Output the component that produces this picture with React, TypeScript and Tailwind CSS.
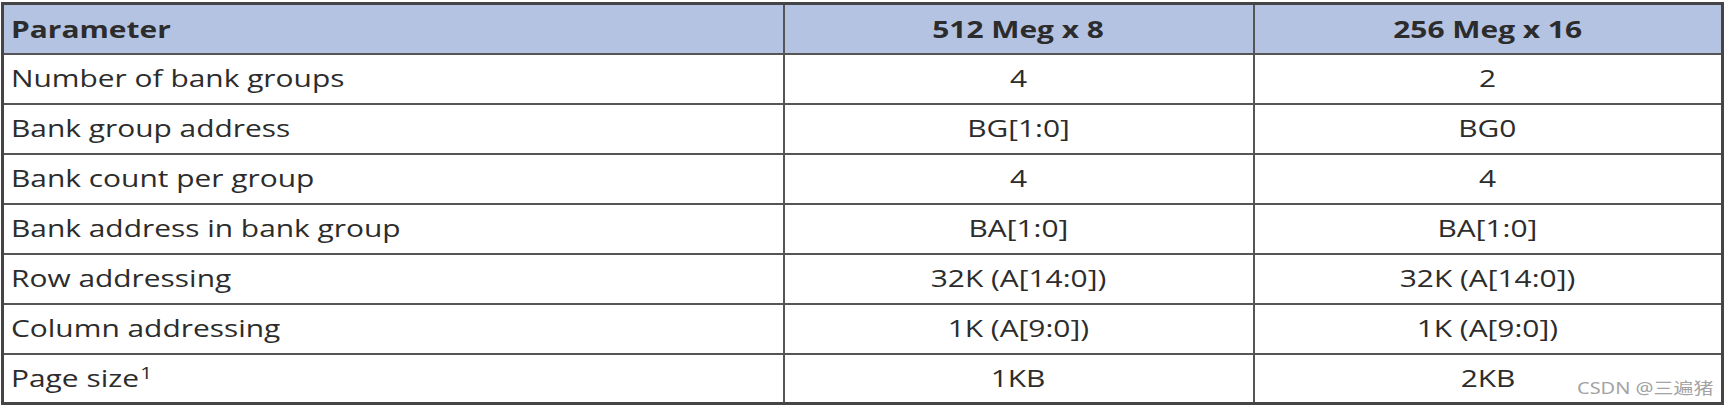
const ROWS: { name: React.ReactNode; a: string; b: string }[] = [
  { name: "Number of bank groups", a: "4", b: "2" },
  { name: "Bank group address", a: "BG[1:0]", b: "BG0" },
  { name: "Bank count per group", a: "4", b: "4" },
  { name: "Bank address in bank group", a: "BA[1:0]", b: "BA[1:0]" },
  { name: "Row addressing", a: "32K (A[14:0])", b: "32K (A[14:0])" },
  { name: "Column addressing", a: "1K (A[9:0])", b: "1K (A[9:0])" },
  {
    name: (
      <>
        Page size<sup className="text-[16px] relative -top-[8px] ml-[1px]">1</sup>
      </>
    ),
    a: "1KB",
    b: "2KB",
  },
];

// the source image is stretched sideways, so glyphs are widened to match
function Wide({ children, center }: { children: React.ReactNode; center?: boolean }) {
  return (
    <span className={`inline-block whitespace-nowrap scale-x-[1.3] ${center ? "origin-center" : "origin-left"}`}>
      {children}
    </span>
  );
}

export default function App() {
  const cell = "border-2 border-[#555555] px-[7px] py-0 h-[50px]";

  return (
    <div className="relative w-[1728px] h-[407px] bg-white pt-[2px] pl-[1px] font-['Open_Sans','Noto_Sans',sans-serif] text-[23px] text-[#2c2c2c]">
      <table className="border-collapse border-[3px] border-[#454545] w-[1723px] table-fixed">
        <colgroup>
          <col className="w-[781px]" />
          <col className="w-[470px]" />
          <col />
        </colgroup>
        <thead>
          <tr className="bg-[#b5c3e3] font-bold">
            <th className={`${cell} text-left`}>
              <Wide>Parameter</Wide>
            </th>
            <th className={`${cell} text-center`}>
              <Wide center>512 Meg x 8</Wide>
            </th>
            <th className={`${cell} text-center`}>
              <Wide center>256 Meg x 16</Wide>
            </th>
          </tr>
        </thead>
        <tbody>
          {ROWS.map((r, i) => (
            <tr key={i}>
              <td className={cell}>
                <Wide>{r.name}</Wide>
              </td>
              <td className={`${cell} text-center`}>
                <Wide center>{r.a}</Wide>
              </td>
              <td className={`${cell} text-center`}>
                <Wide center>{r.b}</Wide>
              </td>
            </tr>
          ))}
        </tbody>
      </table>
      <div className="absolute left-[1577px] top-[376px] whitespace-nowrap text-[16px] text-[#a3a3a3] font-['Noto_Sans','Noto_Sans_CJK_SC',sans-serif]">
        <span className="inline-block scale-x-[1.25] origin-left">CSDN @三遍猪</span>
      </div>
    </div>
  );
}
